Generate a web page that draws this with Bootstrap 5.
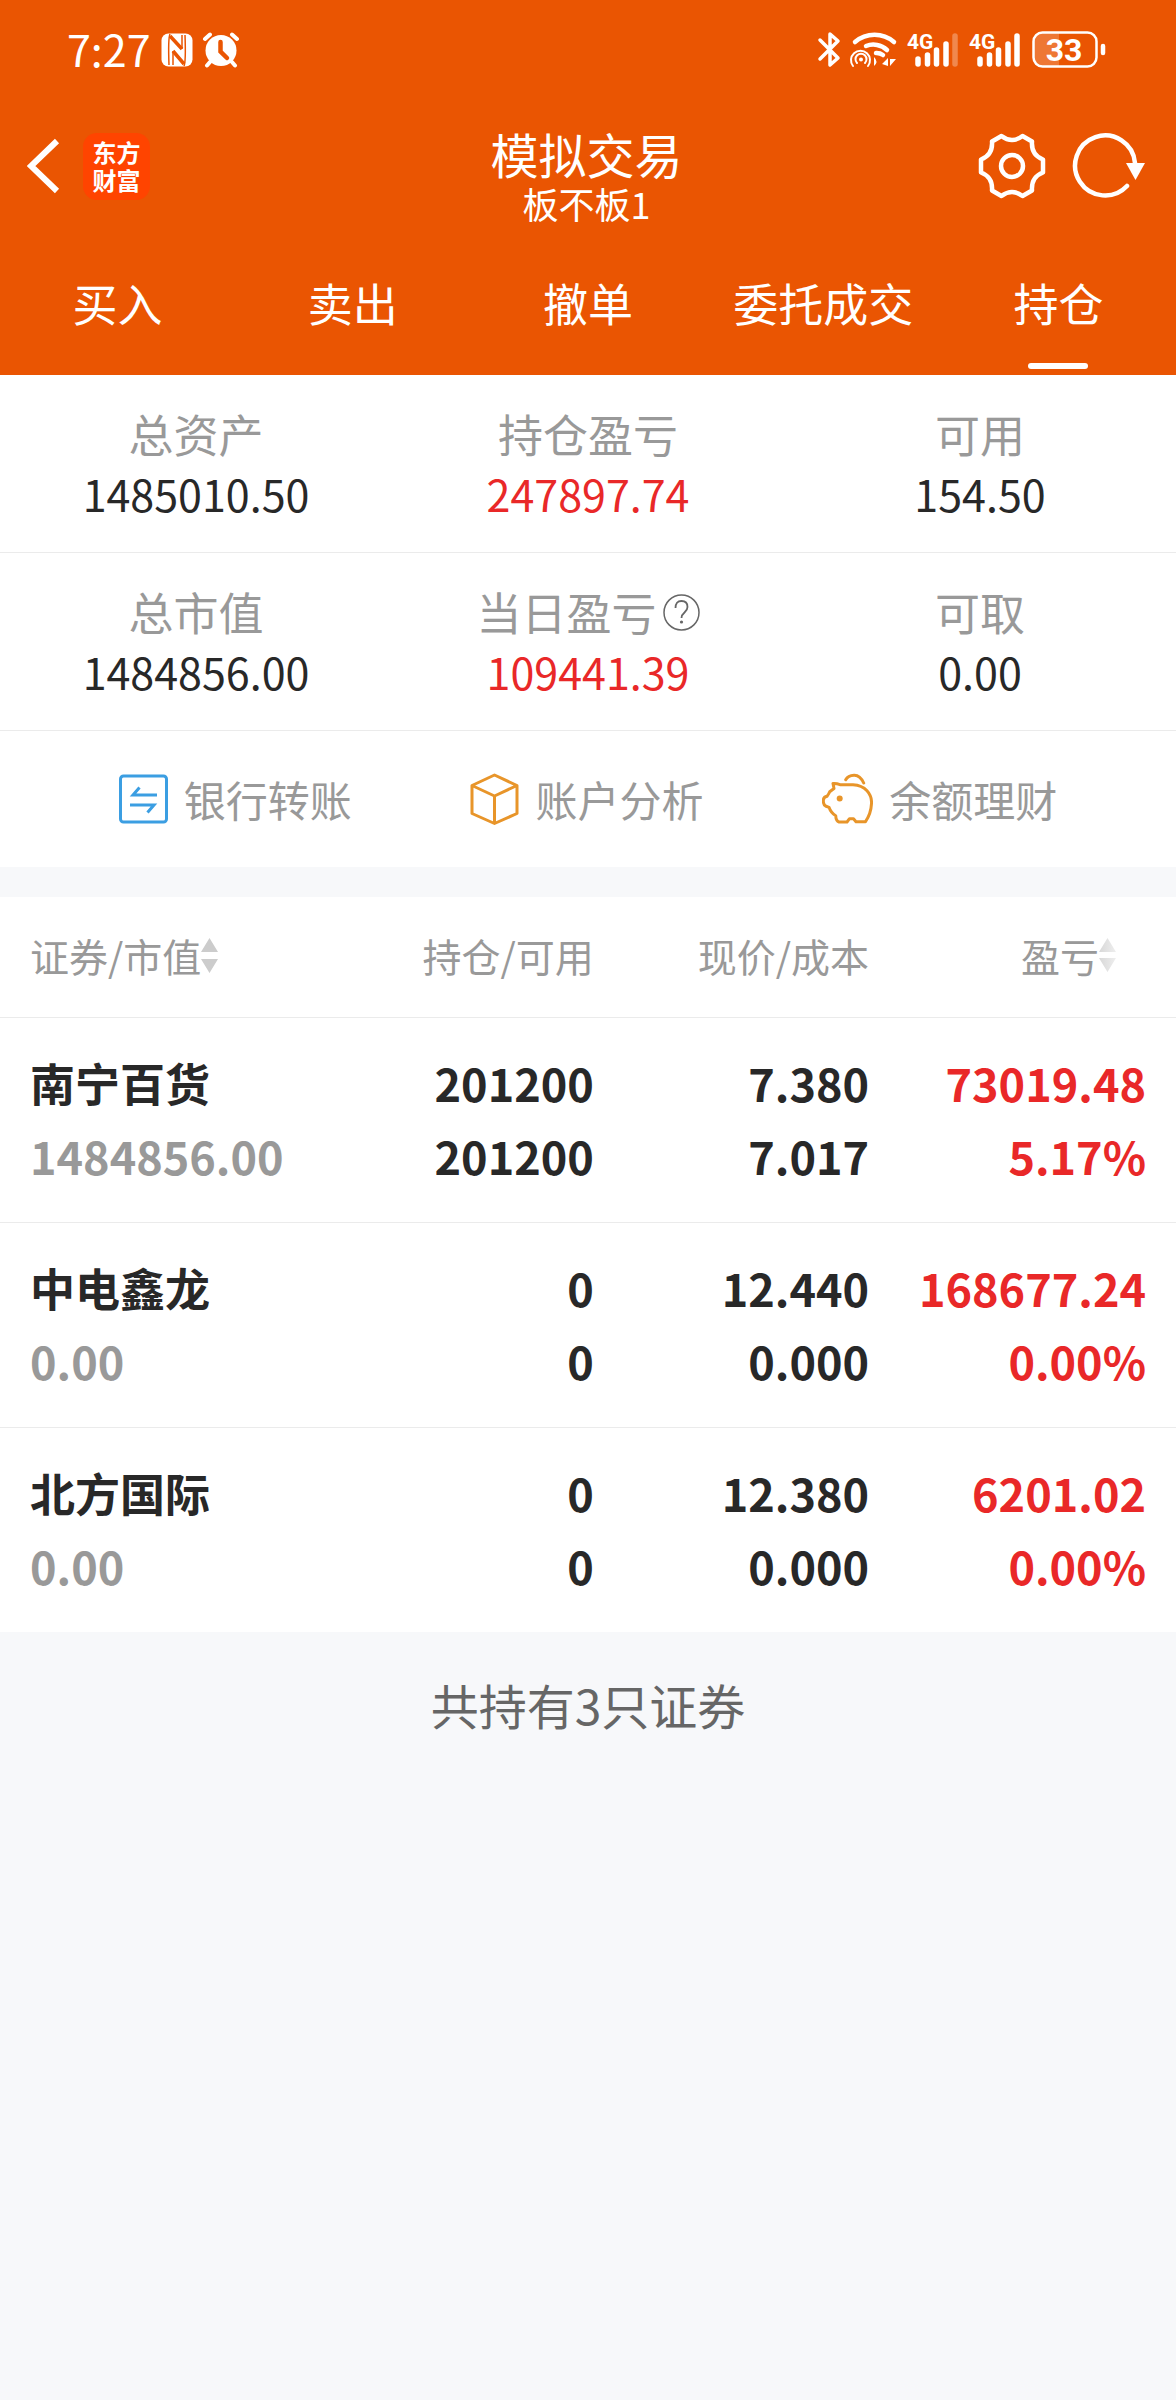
<!DOCTYPE html>
<html lang="zh-CN">
<head>
<meta charset="utf-8">
<meta name="viewport" content="width=device-width, initial-scale=1">
<title>模拟交易</title>
<link href="https://cdn.jsdelivr.net/npm/bootstrap@5.3.0/dist/css/bootstrap.min.css" rel="stylesheet">
<style>
  body { font-family: "Noto Sans CJK SC", sans-serif; background: #f7f8fa; color: #282828; }
  svg { display: block; flex: none; }
  .app-head { background: #ea5502; color: #fff; }
  .status-bar { height: 100px; padding: 0 70px 0 67px; }
  .clock { font-size: 43px; line-height: 52px; margin-right: 10px; padding-bottom: 4px; }
  .title-bar { padding: 25px 30px 0 27px; }
  .bar-side { height: 82px; flex: 1 1 0; }
  .icon-btn { background: none; border: 0; padding: 0; color: inherit; }
  .brand { width: 67px; height: 67px; border-radius: 14px; background: #ff4400; font: 700 24px/28px "Noto Sans CJK SC", sans-serif; color: #fff; text-decoration: none; margin-left: 23px; }
  .app-title { font-size: 48px; line-height: 56px; }
  .app-sub { font-size: 36px; line-height: 45px; }
  .tabs .nav-link { color: #fff; font-size: 45px; line-height: 52px; padding: 51px 0 46px; }
  .tabs .nav-link.active::after { content: ""; position: absolute; left: calc(50% - 30px); bottom: 6px; width: 60px; height: 6px; border-radius: 3px; background: #fff; }
  .stat-row { padding: 29px 0 29px; border-bottom: 1px solid #ebebeb; }
  .stat-label { font-size: 45px; line-height: 60px; color: #999; gap: 6px; }
  .stat-value { font-size: 43px; line-height: 59px; }
  .rise { color: #e92828; }
  .actions { height: 136px; }
  .actions a { font-size: 42px; line-height: 60px; color: #999; gap: 16px; }
  .holdings { margin-top: 30px; table-layout: fixed; width: 100%; background: #fff; }
  .holdings th, .holdings td { padding: 28px 0 30px; border-bottom: 1px solid #ebebeb; font-size: 45px; line-height: 73px; font-weight: 700; text-align: right; }
  .holdings tr > :first-child { text-align: left; padding-left: 30px; }
  .holdings tr > :last-child { padding-right: 30px; }
  .holdings thead th { font-size: 39px; line-height: 60px; font-weight: 400; color: #999; padding-top: 28px; padding-bottom: 32px; }
  .holdings thead th:last-child { padding-right: 60px; }
  .holdings tbody tr:last-child > * { border-bottom: 0; }
  .holdings .stock { display: block; }
  .holdings .sub { color: #999; }
  .total { font-size: 48px; line-height: 60px; color: #666; padding-top: 42px; }
</style>
</head>
<body>
<header class="app-head">
  <div class="status-bar d-flex align-items-center justify-content-between">
    <div class="d-flex align-items-center">
      <span class="clock">7:27</span>
      <svg width="32" height="34" viewBox="0 0 32 34" fill="none" stroke="#ea5502"><rect x="0.500" y="0.500" width="31" height="33" rx="7" fill="#fff" stroke="none"/><path d="M9 1q-2 4-1 31M23 33q2-4 1-31" stroke-width="1.500"/><path d="M9 3l12 13M12 18l11 13" stroke-width="3.500"/><path d="M12 18v14M21 2v14" stroke-width="1.500"/></svg>
      <svg class="ms-2" width="40" height="36" viewBox="0 0 40 36" fill="none" stroke="#fff" stroke-linecap="round"><circle cx="20" cy="18.500" r="15.500" fill="#fff" stroke="none"/><path d="M4 7l5-4.500M36 7l-5-4.500M9 30l-3 3.500M31 30l3 3.500" stroke-width="4"/><path d="M19.500 10v9.500l6.500 6.500" stroke="#ea5502" stroke-width="4.500"/></svg>
    </div>
    <svg width="290" height="60" viewBox="816 20 290 60" fill="none" stroke="#fff" stroke-linecap="round" stroke-linejoin="round">
      <path d="M820 40l18 18-8 7V34l8 7-18 18" stroke-width="3.500"/>
      <path d="M855 42a30 30 0 0 1 39 0M866 46a20 20 0 0 1 21 4M876 53a11 11 0 0 1 7 2" stroke-width="4.500"/>
      <path d="M853 66a9.500 9.500 0 1 1 15 0M857 63a5.500 5.500 0 1 1 8 0" stroke-width="2"/>
      <circle cx="861" cy="59.500" r="2" fill="#fff" stroke="none"/>
      <path d="M874 57q5 5 0 9zM882 64l6-6v8zM890 59v7l6-7z" fill="#fff" stroke="none"/>
      <g stroke-width="5.500"><path d="M918 59v5M927.500 55v9M936.500 50v14M946 44v20"/><path d="M955 36v28" opacity=".3"/><path d="M980 59v5M989.500 55v9M998.500 50v14M1008 44v20M1017 36v28"/></g>
      <g fill="#fff" stroke="none" font-family="Roboto, sans-serif" font-weight="700" font-size="21"><text x="907" y="49">4G</text><text x="969" y="49">4G</text></g>
      <path d="M1059 33h-16q-10 0-10 9v16q0 9 10 9h16z" fill="#fff" fill-opacity=".2" stroke="none"/>
      <rect x="1033.500" y="32.500" width="63" height="34" rx="9" stroke-width="2.500"/>
      <path d="M1103 46v7" stroke-width="4.500"/>
      <text x="1064" y="61" text-anchor="middle" fill="#fff" stroke="none" font-family="Roboto, sans-serif" font-weight="700" font-size="32">33</text>
    </svg>
  </div>

  <div class="title-bar d-flex align-items-start">
    <div class="bar-side d-flex align-items-center">
      <button class="icon-btn" type="button" aria-label="返回"><svg width="33" height="56" viewBox="0 0 33 56" fill="none" stroke="#fff" stroke-width="6"><path d="M30 3L4 28l26 25"/></svg></button>
      <a class="brand d-flex flex-column align-items-center justify-content-center" href="#"><span>东方</span><span>财富</span></a>
    </div>
    <div class="text-center">
      <h1 class="app-title fw-normal mb-0">模拟交易</h1>
      <div class="app-sub">板不板1</div>
    </div>
    <div class="bar-side d-flex align-items-center justify-content-end">
      <button class="icon-btn" type="button" aria-label="设置"><svg width="68" height="68" viewBox="0 0 68 68" fill="none" stroke="#fff" stroke-width="4.500" stroke-linejoin="round"><circle cx="34" cy="34" r="11"/><path d="M23.500 4Q34 12 44.500 4L54 9.500Q53 23 65 27.500V40.500Q53 45 54 58.500L44.500 64Q34 56 23.500 64L14 58.500Q15 45 3 40.500V27.500Q15 23 14 9.500Z"/></svg></button>
      <button class="icon-btn" type="button" aria-label="刷新"><svg class="ms-4" width="76" height="68" viewBox="2 0 76 68" fill="none" stroke="#fff" stroke-width="4.500" stroke-linecap="round"><path d="M67 31a30 30 0 1 0-8 23"/><path d="M58 31h19l-9.500 17z" fill="#fff" stroke="none"/></svg></button>
    </div>
  </div>

  <nav class="tabs nav nav-justified">
    <a class="nav-link" href="#">买入</a>
    <a class="nav-link" href="#">卖出</a>
    <a class="nav-link" href="#">撤单</a>
    <a class="nav-link text-nowrap" href="#">委托成交</a>
    <a class="nav-link active position-relative" aria-current="page" href="#">持仓</a>
  </nav>
</header>

<main>
  <section class="bg-white text-center">
    <div class="row g-0 stat-row">
      <div class="col-4"><div class="stat-label">总资产</div><div class="stat-value">1485010.50</div></div>
      <div class="col-4"><div class="stat-label">持仓盈亏</div><div class="stat-value rise">247897.74</div></div>
      <div class="col-4"><div class="stat-label">可用</div><div class="stat-value">154.50</div></div>
    </div>
    <div class="row g-0 stat-row">
      <div class="col-4"><div class="stat-label">总市值</div><div class="stat-value">1484856.00</div></div>
      <div class="col-4">
        <div class="stat-label d-flex align-items-center justify-content-center">当日盈亏
          <button class="icon-btn" type="button" aria-label="说明"><svg width="37" height="37" viewBox="0 0 37 37" fill="none" stroke="#666" stroke-width="1.500"><circle cx="18.500" cy="18.500" r="17.500"/><path d="M12.500 14q0-7 6-7t6 6q0 3-3 5.500t-3 5.500" stroke-width="1.800"/><circle cx="18.500" cy="28" r="1.600" fill="#666" stroke="none"/></svg></button>
        </div>
        <div class="stat-value rise">109441.39</div>
      </div>
      <div class="col-4"><div class="stat-label">可取</div><div class="stat-value">0.00</div></div>
    </div>
    <div class="actions d-flex align-items-center justify-content-evenly">
      <a class="d-flex align-items-center text-decoration-none" href="#"><svg width="49" height="50" viewBox="0 0 49 50" fill="none" stroke="#3b9ee2" stroke-width="3"><rect x="1.500" y="2" width="46" height="46" rx="3"/><path d="M38 21H14l6.500-7.500M11 31h24l-6.500 7.500"/></svg>银行转账</a>
      <a class="d-flex align-items-center text-decoration-none" href="#"><svg width="49" height="52" viewBox="0 0 49 52" fill="none" stroke="#e8952a" stroke-width="3" stroke-linejoin="round"><path d="M24.500 2L47 12.500v28L24.500 50.500 2 40.500v-28zM2 12.500L24.500 23 47 12.500M24.500 23v27.500"/></svg>账户分析</a>
      <a class="d-flex align-items-center text-decoration-none" href="#"><svg width="51" height="52" viewBox="1 0 51 52" fill="none" stroke="#e8952a" stroke-width="3" stroke-linejoin="round" stroke-linecap="round"><path d="M12 10.500q3-.5 7 1.200h13q9 .5 14 6t4.500 13q-.5 10-6 18H35l-2.500-3h-4L26 49h-8q-3-1-3.300-6.300Q10 40 8 34.300L4.500 33Q2.500 32 2.300 28t3.700-4.700Q8 20.500 8.700 18.700L13 15.500zM24.700 6.700Q27 2.500 33 2.200T42.700 10"/><circle cx="18.700" cy="25.500" r="3" fill="#e8952a" stroke="none"/></svg>余额理财</a>
    </div>
  </section>

  <table class="holdings">
    <colgroup><col style="width:25%"><col style="width:25.500%"><col style="width:23.400%"><col style="width:26.100%"></colgroup>
    <thead>
      <tr>
        <th scope="col"><span class="d-inline-flex align-items-center">证券/市值<svg width="17" height="36" viewBox="0 0 17 36" fill="#ccc"><path d="M8.500 1L17 15H0zM0 22h17L8.500 36z"/></svg></span></th>
        <th scope="col">持仓/可用</th>
        <th scope="col">现价/成本</th>
        <th scope="col"><span class="d-inline-flex align-items-center">盈亏<svg width="17" height="36" viewBox="0 0 17 36"><defs><linearGradient id="fade"><stop offset="0" stop-color="#d8d8d8"/><stop offset="1" stop-color="#eee"/></linearGradient></defs><path fill="url(#fade)" d="M8.500 1L17 15H0zM0 21h17L8.500 35z"/></svg></span></th>
      </tr>
    </thead>
    <tbody>
      <tr><td><span class="stock">南宁百货</span><span class="sub">1484856.00</span></td><td>201200<br>201200</td><td>7.380<br>7.017</td><td class="rise">73019.48<br>5.17%</td></tr>
      <tr><td><span class="stock">中电鑫龙</span><span class="sub">0.00</span></td><td>0<br>0</td><td>12.440<br>0.000</td><td class="rise">168677.24<br>0.00%</td></tr>
      <tr><td><span class="stock">北方国际</span><span class="sub">0.00</span></td><td>0<br>0</td><td>12.380<br>0.000</td><td class="rise">6201.02<br>0.00%</td></tr>
    </tbody>
  </table>
  <p class="total text-center mb-0">共持有3只证券</p>
</main>
<script src="https://cdn.jsdelivr.net/npm/bootstrap@5.3.0/dist/js/bootstrap.bundle.min.js"></script>
</body>
</html>
